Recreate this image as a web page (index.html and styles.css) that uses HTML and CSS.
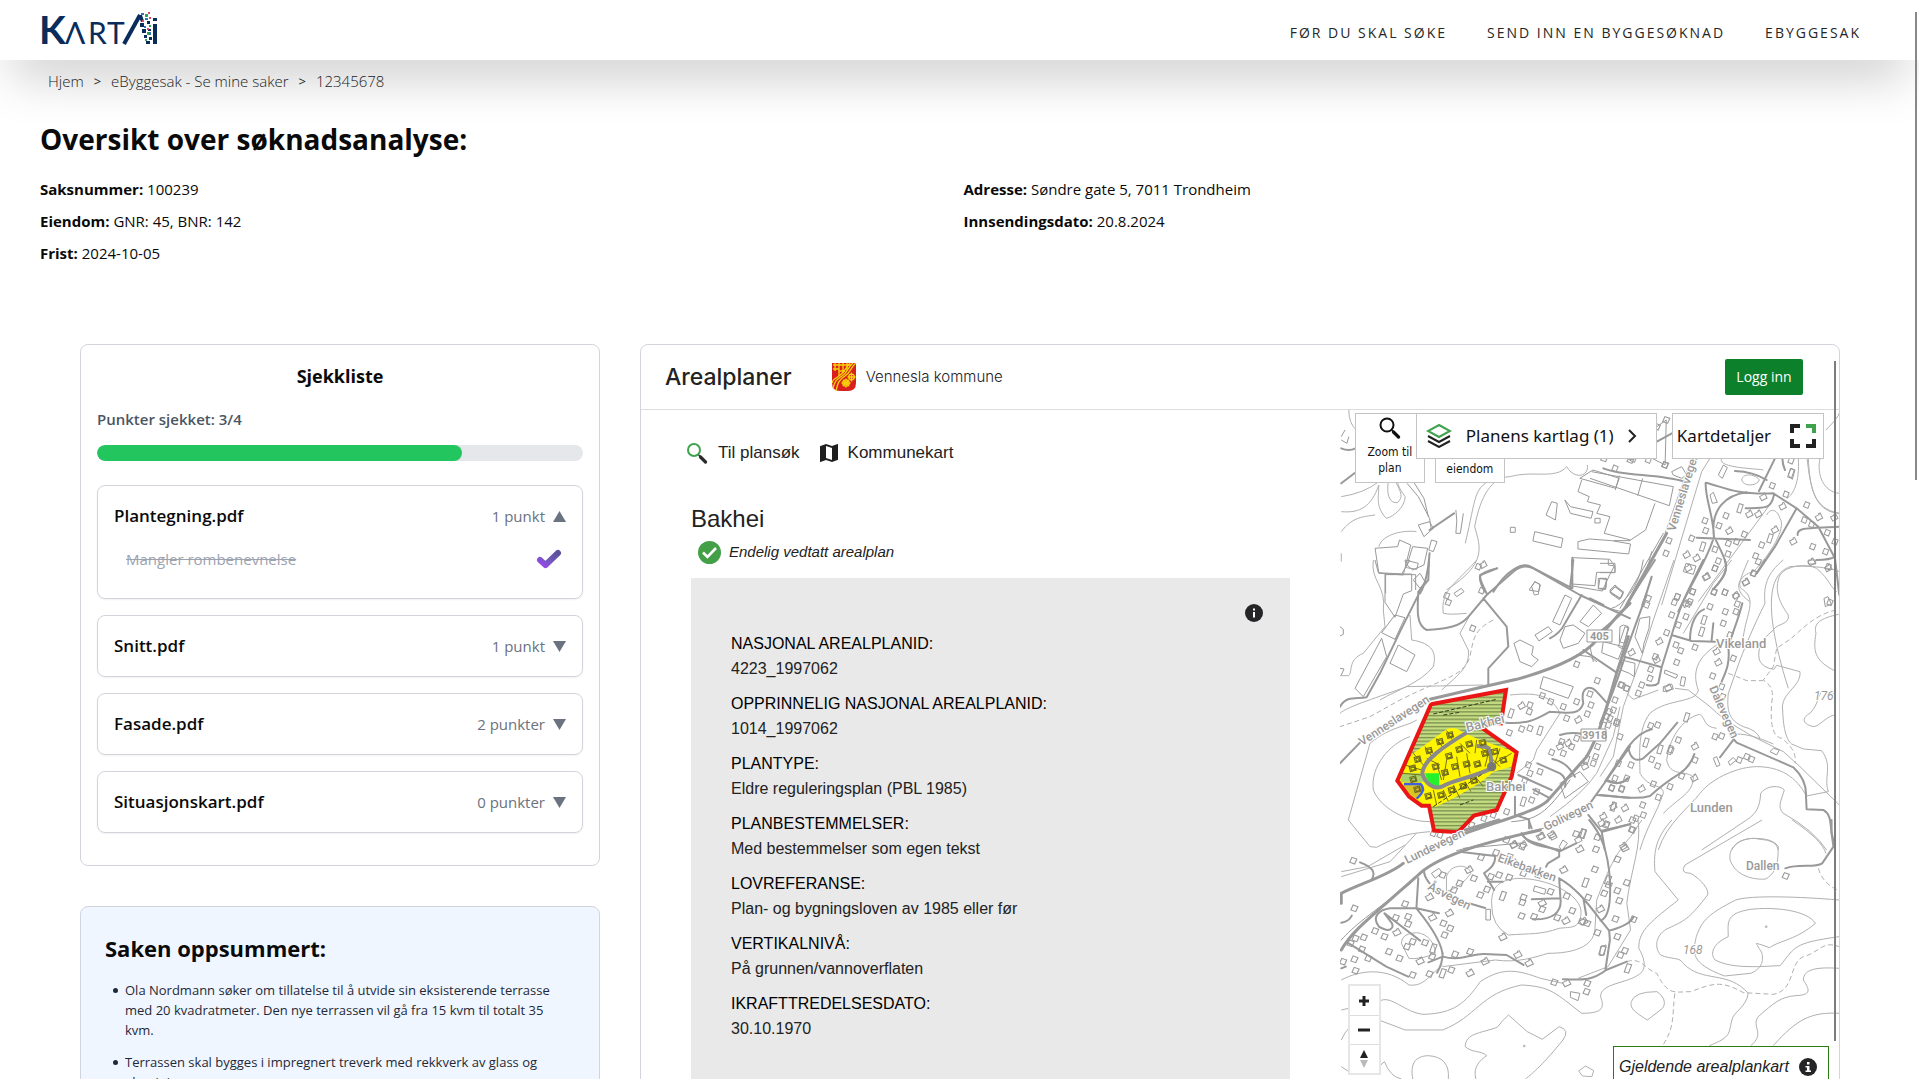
FILE: index.html
```html
<!DOCTYPE html>
<html lang="nb">
<head>
<meta charset="utf-8">
<meta name="viewport" content="width=device-width, initial-scale=1">
<title>KartAI – Oversikt over søknadsanalyse</title>
<link rel="stylesheet" href="styles.css">
</head>
<body>
<header class="topbar">
  <a class="logo" href="#" aria-label="KartAI">
    <svg width="122" height="60" viewBox="0 0 122 60" aria-hidden="true">
      <g class="logo-text">
        <text x="-1" y="44" font-size="39" font-weight="700">K</text>
        <text x="25" y="44" font-size="30">Λ</text>
        <text x="48" y="44" font-size="30">R</text>
        <text x="67" y="44" font-size="30">T</text>
      </g>
      <g transform="translate(2 11)">
      <path d="M82 33 98 4" stroke="#0a2c5c" stroke-width="4" fill="none"/>
      <path d="M111 13h4v20h-4zM111 7h4v3h-4zM96 4h4l2 6-3 1zM98 12h4v4h-4zM100 18h4v4h-4zM102 24h3v3h-3zM104 30h4v3h-4zM107 26h3v3h-3zM105 10h3v3h-3zM106 18h3v2h-3z" fill="#0a2c5c"/>
      <path d="M99 2h3v2h-3zM103 7h3v2h-3zM102 15h2v2h-2zM107 21h2v3h-2z" fill="#2f6fc4"/>
      <path d="M103 3h3v3h-3zM107 14h2v2h-2zM105 21h2v3h-2zM103 28h2v2h-2z" fill="#2fa35a"/>
      <path d="M106 1h2v2h-2zM107 6h2v2h-2zM105 17h2v2h-2zM100 9h2v2h-2z" fill="#dc4b5f"/>
      </g>
    </svg>
  </a>
  <nav class="mainnav">
    <a href="#">Før du skal søke</a>
    <a href="#">Send inn en byggesøknad</a>
    <a href="#">eByggesak</a>
  </nav>
</header>

<nav class="crumbs" aria-label="Brødsmulesti">
  <a href="#">Hjem</a><span class="sep">&gt;</span><a href="#">eByggesak - Se mine saker</a><span class="sep">&gt;</span><a href="#">12345678</a>
</nav>

<main>
  <section class="overview">
    <h1>Oversikt over søknadsanalyse:</h1>
    <div class="facts">
      <div>
        <p><b>Saksnummer:</b> 100239</p>
        <p><b>Eiendom:</b> GNR: 45, BNR: 142</p>
        <p><b>Frist:</b> 2024-10-05</p>
      </div>
      <div>
        <p><b>Adresse:</b> Søndre gate 5, 7011 Trondheim</p>
        <p><b>Innsendingsdato:</b> 20.8.2024</p>
      </div>
    </div>
  </section>

  <div class="columns">
    <div class="left">
      <section class="card checklist">
        <h2>Sjekkliste</h2>
        <p class="status">Punkter sjekket: 3/4</p>
        <div class="bar" role="progressbar" aria-valuenow="3" aria-valuemax="4" aria-label="Punkter sjekket"><div class="fill" style="width:75%"></div></div>
        <div class="item">
          <button class="row" aria-expanded="true"><span class="file">Plantegning.pdf</span><span class="count">1 punkt</span><svg class="tri" width="13" height="11" viewBox="0 0 13 11" aria-hidden="true"><path d="M6.500 0 13 11H0z"/></svg></button>
          <div class="point">
            <s>Mangler rombenevnelse</s>
            <button class="tick" aria-label="Marker som ikke sjekket">
              <svg width="26" height="20" viewBox="0 0 26 20" aria-hidden="true"><defs><linearGradient id="tickfill" x1="1" y1="0" x2="0" y2="1"><stop offset="0" stop-color="#5b5299"/><stop offset=".55" stop-color="#7259bd"/><stop offset="1" stop-color="#9a45ee"/></linearGradient></defs><path d="M4 11 9.500 16 22 4" fill="none" stroke="url(#tickfill)" stroke-width="6" stroke-linecap="round" stroke-linejoin="round"/></svg>
            </button>
          </div>
        </div>
        <div class="item"><button class="row" aria-expanded="false"><span class="file">Snitt.pdf</span><span class="count">1 punkt</span><svg class="tri" width="13" height="11" viewBox="0 0 13 11" aria-hidden="true"><path d="M0 0h13L6.500 11z"/></svg></button></div>
        <div class="item"><button class="row" aria-expanded="false"><span class="file">Fasade.pdf</span><span class="count">2 punkter</span><svg class="tri" width="13" height="11" viewBox="0 0 13 11" aria-hidden="true"><path d="M0 0h13L6.500 11z"/></svg></button></div>
        <div class="item"><button class="row" aria-expanded="false"><span class="file">Situasjonskart.pdf</span><span class="count">0 punkter</span><svg class="tri" width="13" height="11" viewBox="0 0 13 11" aria-hidden="true"><path d="M0 0h13L6.500 11z"/></svg></button></div>
      </section>

      <section class="card summary">
        <h2>Saken oppsummert:</h2>
        <ul>
          <li>Ola Nordmann søker om tillatelse til å utvide sin eksisterende terrasse med 20 kvadratmeter. Den nye terrassen vil gå fra 15 kvm til totalt 35 kvm.</li>
          <li>Terrassen skal bygges i impregnert treverk med rekkverk av glass og aluminium.</li>
        </ul>
      </section>
    </div>

    <section class="card plans">
      <header class="planhead">
        <h2>Arealplaner</h2>
        <svg width="24" height="28" viewBox="0 0 24 28" aria-hidden="true">
          <path d="M0 0h24v20q0 8-8 8H8q-8 0-8-8z" fill="#d8201f"/>
          <g fill="none" stroke="#f7d308" stroke-width="1.300">
            <path d="M1 2h18M3 0v8M7 0v13M11 0v10M15 0v7M1 6h6M7 8h6"/>
            <path d="M24 0C19 4 19 9 13 13S6 19 4 28M21 0C16 4 16 9 10 13S3 18 1 25M18 0C14 4 13 9 7 13S1 17 0 20"/>
            <circle cx="19.500" cy="14" r="2.800"/><circle cx="14" cy="20" r="3.200"/>
            <path d="M19.500 9.500v9M15.500 14h8M14 15.500v9M9.500 20h9M11 17l6 6M17 17l-6 6"/>
          </g>
        </svg>
        <span class="muni">Vennesla kommune</span>
        <button class="login">Logg inn</button>
      </header>
      <div class="planbody">
        <div class="details">
          <nav class="tools">
            <a href="#"><svg width="22" height="22" viewBox="0 0 22 22" aria-hidden="true"><circle cx="8" cy="8" r="6" fill="none" stroke="#3fa34d" stroke-width="2"/><path d="m12.500 13 2 1.500" stroke="#2b2b2b" stroke-width="1.500"/><path d="m14.500 15 5 5" stroke="#2b2b2b" stroke-width="3.200" stroke-linecap="round"/></svg>Til plansøk</a>
            <a href="#"><svg width="18" height="18" viewBox="0 0 18 18" aria-hidden="true"><path d="M17.500 0 12 2 6 0 .5 2Q0 2.200 0 2.600V17.500Q0 18 .5 18L6 16l6 2 5.500-2q.5-.2.5-.6V.5Q18 0 17.500 0zM12 16 6 14V2l6 2z" fill="#1f1f1f"/></svg>Kommunekart</a>
          </nav>
          <h3>Bakhei</h3>
          <p class="state"><svg width="23" height="23" viewBox="0 0 23 23" aria-hidden="true"><circle cx="11.500" cy="11.500" r="11.500" fill="#43a047"/><path d="m5 11.500 4.500 4.500L18 7" fill="none" stroke="#fff" stroke-width="2.600"/></svg>Endelig vedtatt arealplan</p>
          <div class="box">
            <button class="info" aria-label="Informasjon"><svg width="18" height="18" viewBox="0 0 18 18" aria-hidden="true"><circle cx="9" cy="9" r="9" fill="#252527"/><path d="M8 4.500h2v2H8zM8 8h2v5.500H8z" fill="#fff"/></svg></button>
            <dl>
              <dt>NASJONAL AREALPLANID:</dt><dd>4223_1997062</dd>
              <dt>OPPRINNELIG NASJONAL AREALPLANID:</dt><dd>1014_1997062</dd>
              <dt>PLANTYPE:</dt><dd>Eldre reguleringsplan (PBL 1985)</dd>
              <dt>PLANBESTEMMELSER:</dt><dd>Med bestemmelser som egen tekst</dd>
              <dt>LOVREFERANSE:</dt><dd>Plan- og bygningsloven av 1985 eller før</dd>
              <dt>VERTIKALNIVÅ:</dt><dd>På grunnen/vannoverflaten</dd>
              <dt>IKRAFTTREDELSESDATO:</dt><dd>30.10.1970</dd>
            </dl>
          </div>
        </div>

        <div class="map">
          <svg class="mapsvg" viewBox="1340 410 500 720" preserveAspectRatio="xMinYMin slice" role="img" aria-label="Kart over Bakhei">
            <defs>
              <marker id="ha" markerUnits="userSpaceOnUse" markerWidth="30" markerHeight="30" viewBox="-15 -15 30 30" orient="22"><path class="hs" d="M-7-8H7V8H-7z"/></marker>
              <marker id="hb" markerUnits="userSpaceOnUse" markerWidth="34" markerHeight="34" viewBox="-17 -17 34 34" orient="-28"><path class="hs" d="M-9-7H4V-10H9V7H-9z"/></marker>
              <marker id="hc" markerUnits="userSpaceOnUse" markerWidth="40" markerHeight="40" viewBox="-20 -20 40 40" orient="18"><path class="hs" d="M-6-13H6V13H-6z"/></marker>
              <marker id="hy" markerUnits="userSpaceOnUse" markerWidth="30" markerHeight="30" viewBox="-15 -15 30 30" orient="-15"><path class="hs hy" d="M-9-8H9V8H-9zM-5-4H6V5H-5z"/></marker>
              <pattern id="hatch" width="9" height="11" patternUnits="userSpaceOnUse"><path d="M0 0h9v11H0z" fill="#c3dc82"/><path class="sc" d="M0 5h9" stroke="#2c3a12" stroke-width="2"/></pattern>
            </defs>

            <!-- upper left: industrial area -->
            <g transform="translate(1330 330) scale(.3757 .3333)">
              <path class="c" d="M30 500Q90 490 130 455M30 545C80 550 110 530 130 465C130 500 120 530 150 565C170 560 200 530 200 500Q180 470 180 455M155 455C150 500 160 520 180 518C195 500 190 490 175 455M30 605C60 560 90 560 120 555M440 445C380 470 390 500 360 640M310 780C420 700 400 650 385 590C400 500 430 440 480 440C540 420 600 450 630 410C650 450 690 440 685 405M130 650C140 610 200 600 230 605M50 240Q50 280 70 300Q110 260 150 300M30 670v25M1320 300Q1355 260 1355 250M1270 385C1280 500 1300 545 1355 550"/>
              <path class="b" d="M235 585l30-10 10 20-25 25zM120 655l60-5 5-20 30 15-20 90-65-5zM148 790v-56h80v46M205 705l15-55 40 5-10 50-30 15zM335 540q5 30 0 70h12l8-60M670 450l-10 35 30 15-5 15 35 10-10 25 35 10-15 50 70 20 20-15 20-15 25-80M625 510l15 20 60 15-5 20-55-15zM545 605l75 20-5 28-75-20zM660 635l30-8 60 5 50 10-5 30-135-15zM755 632h45M645 683l100 5 12 20-12 25-20 50-80-15zM480 592h13v15h-13zM575 555l15-40 15 5-5 50zM705 565h14v14h-14zM30 330l15 10 5-20M40 300l-10 20M270 630l15 5-10 30-12-5zM100 300l25-20"/>
              <path class="b" d="M205 460L235 500 265 565 270 600M222 455L250 505 262 560M700 420l70 25-10 30-95-30zM530 780l15-25 15 10-5 20z"/>
              <path class="b" style="marker:url(#ha)" fill="none" stroke="none" d="M730 385L765 370 800 390 840 375 892 405 895 270 870 290"/>
              <path class="r" d="M30 460L65 430 110 420M30 355Q50 365 68 355M265 600L330 550M265 670Q260 750 240 790M445 715L400 735Q395 750 412 785M435 785C470 720 510 700 530 708L645 775V683M870 335L910 310"/>
            </g>

            <!-- upper right -->
            <g transform="translate(1590 455) scale(.3333)">
              <path class="c" d="M360 10L335 50 215 450M305 10L225 235M395 10C380 40 500 40 520 45M455 75C460 50 500 60 508 75C500 95 460 95 455 75M690 10C680 60 700 110 748 115M655 10C660 100 670 160 748 175M625 10C630 80 610 120 590 130M480 440C420 400 450 360 490 350C540 300 590 220 570 190C560 160 540 160 530 180M595 700C500 400 560 350 600 335C660 330 730 340 748 350M550 135L325 440"/>
              <path class="b" d="M5 50L250 95 238 152 0 70M88 62L76 105M158 70L143 122M245 50l30-15 15 25-15 10-25-10zM385 60l15-30 12 8-15 32zM360 120l10-8 12 30-15 3zM595 60l8-20 12 5-8 28zM75 395l25 15-10 22-30-20zM30 370h20l-3 30H25z"/>
              <path style="marker:url(#ha)" fill="none" stroke="none" d="M225 30L175 15 130 12 75 40 237 257 228 295 305 250 345 197 347 227 387 212 408 182 463 238 415 265 440 260 414 297 375 283 385 318 375 340 308 410 372 412 405 412 262 425 300 440 547 92 588 118 650 150 665 208 643 195 712 233 735 260 707 290 715 335 668 275 515 270 497 303 492 355 603 17 720 442"/>
              <path style="marker:url(#hb)" fill="none" stroke="none" d="M418 228L295 340 320 310 348 367 438 422 520 127 478 178 505 178 578 155 687 187 733 188 665 322 610 260 468 382 555 225 290 300"/>
              <path style="marker:url(#hc)" fill="none" stroke="none" d="M338 275L450 160 540 250 603 55"/>
              <path class="r" d="M40 40C100 65 200 55 283 80M347 83C345 130 370 180 372 245C350 320 300 390 265 470M347 83C400 95 430 120 550 115L620 160 685 215 735 310 748 420M372 245C360 160 410 120 470 112M320 248L480 255M375 250C400 300 415 330 405 350Q400 370 372 400M620 160L555 275 500 355M435 48Q490 50 530 75M555 10L507 108M577 10Q578 30 585 45M552 120C540 170 520 155 467 160M748 215C660 220 620 215 623 240M680 315Q720 315 735 305M0 430l40 20"/>
              <path class="r w" d="M230 235L110 450"/><path class="r n" d="M220 235L160 340 90 460M185 290q-10 60-70 150M185 370L155 450"/>
            </g>

            <!-- centre left -->
            <g transform="translate(1330 560) scale(.3333)">
              <path class="c" d="M130 0C120 60 170 80 160 150L165 200 100 280C50 300 70 340 55 347H30M240 165L245 240C310 250 320 280 310 320C270 370 200 390 150 420M30 460C50 440 150 410 230 380L460 375M120 550L55 780 120 860 140 862C220 820 250 820 300 815M240 530C180 550 120 620 130 690C150 740 220 785 300 785M120 550C180 500 230 500 260 480M335 390C390 340 420 320 415 270L390 220 420 165M340 160C330 90 380 70 440 0M340 160Q360 165 410 160M540 405C600 400 660 395 690 460L620 570 610 600 560 640M660 770Q760 700 800 640L850 530 870 440"/>
              <path class="c d" d="M490 180C430 210 430 240 420 290C400 350 350 350 210 420L120 470 30 500"/>
              <path class="b" d="M135 0L145 38 215 42 240 0M165 42h80v50l-25 10-25 70-30-45zM195 165l30 8-30 65-40-20zM155 235L75 385 100 410 170 290zM205 255l50 30-25 50-50-25zM640 350l90 30-15 35-85-30zM705 105l20 10-35 80-22-10zM615 225l40-25 12 15-40 28zM690 240l15-40 25-5 35 25-20 30-45 15zM570 240l40 20-5 25 20 15-20 20-35-15-18-55zM750 185l40-50 25 25-40 40zM725 0v72l70 5 5-40h55V18l-20-3V0M690 670l60-35 25 30-70 50zM820 245l60 15-15 38-50-20zM885 200l-20 60 12 6 20-62zM250 60l20-20 15 25-15 20zM225 0l40 10-5 18-30-5zM30 200l10 8v15l-10 5M30 325l12 2-8 18M605 80l10-15 15 8-5 30-12 2zM840 95l15-15 25 20-8 15zM805 55l25 3-3 30-22-2zM372 100l22-15 8 10-22 15z"/>
              <path style="marker:url(#ha)" fill="none" stroke="none" d="M355 127L350 107 428 205 455 92 445 20 637 407 740 313 802 362 662 425 700 440 600 435 598 455 780 402 740 425 783 435 772 462 710 475 600 505 575 507 538 518 665 577 695 545 700 580 725 560 740 535 835 495 797 590 803 560 790 610 595 615 600 640 630 635 585 660 620 695 605 720 490 765 462 775 425 795 530 755 845 685 875 685 865 610 860 490 870 530 890 385 875 375 838 455 330 825 310 820"/>
              <path style="marker:url(#hb)" fill="none" stroke="none" d="M460 15L575 438 745 480 765 620 715 550 690 560 745 840 670 830 635 830 815 790 850 740 550 855 720 770 580 855 820 770"/>
              <path style="marker:url(#hc)" fill="none" stroke="none" d="M543 460L630 512 580 725 770 600 820 500 760 822"/>
              <path class="r" d="M30 610L90 548M30 440C50 405 80 418 110 412L150 340 210 215 270 95M297 0L295 60 265 95C262 150 258 195 290 210C380 205 400 190 420 165L470 105 550 35Q580 10 610 25L750 105 900 175M500 25C440 45 440 40 470 100M460 115L530 200 535 260 475 325V375M755 105L705 190Q690 220 660 235M730 0L720 85M760 270L860 338M525 488C600 495 630 470 660 455C720 460 750 465 760 430C750 380 780 375 800 395L830 428M690 525Q720 515 760 522M622 610L690 640Q712 655 705 680M667 597Q710 605 735 650M565 645L665 690M610 688L655 712M555 710V765L595 778 605 805M900 560L830 660 780 730M800 705L900 713M830 660Q870 680 892 655M775 765L815 815 825 870M575 820Q590 850 640 860L690 870"/>
              <path class="r w" d="M300 418L470 378 560 358C660 330 760 290 800 240L865 165 900 130M895 230L860 340C830 440 810 520 770 590L650 725C620 750 580 760 400 822"/>
              <path class="r n" d="M740 285l40 5 20 15M780 260l10 45M835 145l40 10M545 785C620 780 650 760 720 660M380 872L640 805"/>

              <g class="plan">
              <path d="M303 433L528 390 513 490 488 488 458 505 560 577 545 650 500 750 432 767 384 817 312 812 297 737 275 737 237 710 202 662z" fill="url(#hatch)"/>
              <path d="M222 610L250 580 350 508Q375 498 395 515L450 540 560 577 545 620 490 635C440 680 380 710 318 740L275 737 237 710 215 670 205 655z" fill="#fff500"/>
              <path d="M217 638L275 640 282 665H212z" fill="#a8d26b"/>
              <path d="M217 675L275 675 285 690 260 718 237 705z" fill="#d9c326"/>
              <path d="M222 672L272 672Q290 690 260 716" fill="none" stroke="#3f5fe0" stroke-width="7"/>
              <path d="M250 580L280 615M285 560l22 32M320 535l20 30M350 512l22 35M390 550l30 30M440 540l-5 40M410 580l10 60M380 590l10 60M350 600l-10 60M320 610l15 50M450 560l60 60M480 560l-15 60M510 565l-15 45M545 580l-50 30M310 690l10 45M340 690l15 35M370 675l20 40M405 665l18 30M440 655l20 25M225 615l50 15M215 640l60 5M290 595l40 20" stroke="#777018" stroke-width="3"/>
              <path d="M285 640h42v38q-30 10-42-38z" fill="#25f22d"/>
              <path d="M415 515C340 560 280 600 277 640C285 670 310 690 335 680C370 660 420 655 485 625C480 560 485 560 440 558" fill="none" stroke="#8a8a8a" stroke-width="12"/><circle cx="485" cy="620" r="14" fill="#777"/>
              <path style="marker:url(#hy)" fill="none" stroke="none" d="M360 525L330 545 297 572 263 598 248 625 250 658 262 688 295 708 333 705 365 690 400 678 432 662 317 620 345 638 375 620 410 612 442 612 357 588 388 568 418 552 458 548 465 580 495 575 520 600"/>
              <path d="M310 462L500 418M340 465l50-8M310 740L460 640M390 735l40-15" stroke="#333d20" stroke-width="3" stroke-dasharray="12 6"/>
              <path d="M303 433L528 390 513 490 488 488 458 505 560 577 545 650 500 750 432 767 384 817 312 812 297 737 275 737 237 710 202 662z" fill="none" stroke="#ea1515" stroke-width="12"/>
              </g>
            </g>

            <!-- centre right -->
            <g transform="translate(1600 560) scale(.3333)">
              <path class="c" d="M222 0L160 180 125 290 70 440 40 590 0 650M550 0C500 40 490 80 495 130C460 200 440 250 420 300L385 400C380 450 385 480 430 500Q470 510 480 535M565 165C540 130 520 90 540 45C560 15 620 10 650 25C690 60 690 80 710 95M565 165C570 195 530 190 520 210C490 235 470 260 478 300Q490 325 522 328L530 316 600 335C605 380 540 400 548 450C550 510 560 540 575 552L610 567 665 572C700 620 670 650 685 695L620 708M716 163C660 175 640 190 648 220C640 270 640 300 705 333M708 465C680 465 660 500 640 500C600 490 610 470 630 460C660 430 650 400 670 395L708 400M225 385L265 390 330 440C380 490 430 510 450 525L550 575 600 620 718 735M390 525C430 515 480 535 520 552M175 870C200 790 270 740 300 700C340 650 420 620 470 620C540 620 590 650 620 710M395 870C410 840 450 830 480 838Q530 840 535 870M350 255C280 300 280 350 295 390C290 430 200 415 150 460C110 510 120 600 120 640C150 690 190 670 190 700C170 760 140 800 120 870M200 600C210 520 260 470 300 463C320 480 310 500 350 505M200 600C210 650 250 630 280 650C280 700 240 710 190 760M445 0C420 60 410 80 430 90C470 120 440 160 430 230M395 0L340 70 250 220M80 400L100 418 175 390M305 870L440 780C470 760 480 740 482 700C500 675 540 675 553 690C545 720 530 740 550 760Q640 810 680 870"/>
              <path class="c d" d="M708 150C640 165 600 215 570 238L530 265 520 320 490 360C520 380 520 400 515 430C510 500 520 530 545 535C580 560 590 590 585 610M385 340L440 362H490"/>
              <path class="b" d="M250 35l8-25 30 8-8 25zM30 90l15-15 25 22-12 22-25-18zM195 330l38 15-5 10-35-15zM60 200l10-5 15 5-12 50-15-5zM105 230l15-55 30-5-3 35-15 45 -5 30zM65 300l40 10-2 40-15-10-25-10zM240 375l5-25 12 3-5 26zM190 380l25-8 5 15-30 8zM340 595l10-5 10 25-10 5zM385 605l15-12 8 8-18 15zM510 575l10-10 18 5-8 15zM0 55l20 3-5 30-15-2M0 10h45v28H0M672 115l12-5 10 22-18 8zM625 0h22v12h-22z"/>
              <path style="marker:url(#ha)" fill="none" stroke="none" d="M145 115L140 135 232 110 223 127 278 95 265 132 258 170 215 165 235 195 200 218 342 95 375 97 408 108 330 140 412 132 408 155 376 155 370 190 228 255 242 272 230 307 285 262 166 290 152 328 150 355 400 295 338 348 365 380 368 410 125 375 115 400 62 375 80 385 45 420 40 450 30 475 50 485 152 497 173 495 345 530 365 528 235 540 213 570 155 598 173 618 93 615 285 600 245 648 175 712 210 680 65 688 35 683 45 655 80 655 128 735 108 775 130 765 95 808 20 792 20 470 460 40 475 5 390 225 345 25 440 590 455 598 418 600 160 672"/>
              <path style="marker:url(#hb)" fill="none" stroke="none" d="M320 50L437 68 258 132 178 245 95 278 350 275 355 308 285 560 283 655 125 687 75 745 55 780 70 860 205 385 685 25 170 300"/>
              <path style="marker:url(#hc)" fill="none" stroke="none" d="M305 215L312 180 138 548 180 568 210 570 260 472 40 740"/>
              <path class="r" d="M310 0L270 80C240 140 225 190 215 225L185 322 175 370Q165 380 140 375M72 290L185 322M215 225L275 243 345 245M270 240C270 190 290 155 312 148M335 240L340 190M375 0C385 30 375 50 340 88M427 130C415 180 400 210 385 260C390 310 380 330 365 365M495 0L470 40M390 525L410 548 580 622C610 650 620 680 618 710L620 748 670 750C695 765 690 790 695 820L705 860M400 540L360 592M15 665L85 560Q120 515 155 508M85 560C90 600 110 605 130 595L180 550 232 488M0 705C60 710 110 720 150 708C180 680 200 665 240 640Q270 620 283 582M18 662Q60 680 85 655M5 812L90 793M155 50L130 130 72 290M75 290Q40 400 0 490M165 0L60 165 0 215"/>
              <path class="r n" d="M130 0Q120 60 90 100T35 145"/>
            </g>

            <!-- lower part -->
            <g transform="translate(1330 820) scale(.3757 .3333)">
              <path class="c" d="M30 170L160 125 230 40M30 155L100 140 200 75M430 250C430 200 450 180 500 175C580 175 660 220 668 270C670 330 640 320 610 325C560 345 530 340 475 345Q430 320 430 250M300 440L440 420C500 430 550 410 580 400C650 400 700 380 705 330L710 240C740 150 760 100 800 50L830 0M820 0C830 80 800 150 790 250L800 330 740 440 660 475M910 0C870 50 860 90 865 155L927 240C860 300 820 330 822 385C850 440 830 460 820 465C790 490 720 490 720 530C730 560 730 580 670 580C600 520 590 500 510 495C400 520 390 590 300 630H200L130 600M30 480C80 450 150 440 210 495C250 500 260 470 300 435M130 545C160 520 200 580 250 583C330 580 360 550 400 485C460 440 500 450 560 475L620 490M1150 0L945 135Q930 160 960 160C990 180 1010 210 1005 225C960 290 950 300 900 325C870 340 860 380 880 405C910 420 930 410 940 430C990 490 1060 450 1113 520C1110 560 1070 580 1070 600C1060 640 1070 650 1010 677M1230 0Q1310 60 1320 100M1355 240C1250 230 1120 225 1080 240C1010 280 990 300 975 350C965 400 960 430 1050 468L1120 460C1160 440 1150 410 1150 400C1130 360 1130 370 1150 375L1170 383C1200 360 1240 360 1292 310C1270 270 1180 260 1120 268C1050 280 1060 310 1060 350C1020 370 1010 400 1025 420C1060 440 1100 440 1140 440L1198 437C1240 380 1230 370 1355 350M1130 55C1080 55 1060 90 1065 120C1080 170 1130 180 1160 177C1200 150 1190 100 1194 80Q1180 55 1130 55M845 600C800 570 800 560 802 545Q810 515 870 515C890 530 895 550 885 565zM360 680C360 640 400 640 445 622Q460 600 475 585L525 635 565 658 610 620Q640 630 620 660C570 730 540 760 520 777M360 680C380 700 400 690 417 707C400 720 380 740 388 777M225 800C210 740 220 710 260 707Q320 710 315 777M130 740L145 725Q160 770 190 777M680 738l-18 15 10 15 25 2 5-18zM1355 445C1290 440 1260 450 1260 480C1270 500 1290 525 1240 527C1200 530 1180 550 1140 590C1120 620 1160 640 1120 677M1355 580C1280 575 1240 600 1180 677M30 570L50 565M30 740L50 755M30 660q10-25 20-35M310 170C320 130 370 130 375 160Q350 200 310 215zM190 370Q190 340 230 338C260 340 280 370 280 400Q240 420 210 415ZM515 676h4v4h-4zM1159 318h4v4h-4z"/>
              <path class="c d" d="M790 425C830 410 840 450 870 460C900 530 920 515 960 515C1020 490 1040 480 1100 518L1180 523C1240 510 1220 430 1260 410C1300 400 1310 360 1355 380M918 520C910 580 920 620 885 677M1300 145Q1310 190 1355 212"/>
              <path class="b" d="M545 198l30 10-4 15-30-10zM415 268h12v32h-12zM720 380l15-5-5 30-12 2zM610 80l10-20 12 10-15 22zM270 160l20-15 8 12-18 18zM640 515l25 5-5 22-20-10z"/>
              <path style="marker:url(#ha)" fill="none" stroke="none" d="M62 122L65 265 200 252 208 290 208 312 175 293 120 333 145 350 90 352 68 355 85 388 65 418 102 415 68 452 157 395 185 415 205 380 220 365 253 368 272 410 265 462 220 465 302 310 320 325 305 345 373 395 333 403 323 450 400 225 418 208 383 175 402 112 442 98 470 60 512 80 478 110 450 165 428 170 515 232 587 215 512 247 565 268 510 288 543 290 605 293 645 272 670 305 685 310 630 228 687 232 730 220 765 212 742 195 770 242 705 148 765 118 708 88 790 188 712 338 765 350 773 405 785 392 760 297 808 298 685 490 683 515 597 487 477 172 515 160 555 165 805 0 805 30 712 52 655 42 735 15 1213 168 35 425 55 370 300 165 345 190 330 210"/>
              <path style="marker:url(#hb)" fill="none" stroke="none" d="M178 338L273 293 318 280 240 424 373 460 413 425 460 352 500 405 530 430 565 250 628 303 720 268 630 490 665 88 622 150 590 45 560 50 490 75 265 232 370 150 490 130 785 85 675 305"/>
              <path style="marker:url(#hc)" fill="none" stroke="none" d="M300 460L275 385 460 228 680 188 725 392 793 445 740 180 672 40"/>
              <path class="r" d="M80 127C110 140 125 155 110 180M345 95L440 108C440 140 420 150 410 160L437 210M420 185H460M235 175L230 265M250 150Q250 170 265 190M230 265H160C130 270 110 290 130 320C160 340 170 325 165 310L145 280 240 362M230 265L290 280M230 265C270 320 300 370 300 410C350 425 380 400 410 402L470 405 515 435M300 400Q300 430 285 458M50 370L150 440 208 470M300 410L262 427M370 250L413 264M510 40C520 70 570 70 610 95L655 70M610 95V110L580 130 575 140M610 175C650 200 680 240 720 300L743 332 745 360 733 450M690 0C720 40 740 90 745 180Q750 290 720 302M743 332Q800 315 808 290M620 478C680 480 700 480 735 450L790 425M610 175L613 230C620 280 590 300 540 298M537 238L612 235M675 240L682 285M725 35L800 12M1212 145C1250 130 1290 145 1310 130L1340 80 1335 40V0M30 308Q50 305 58 287M30 445l12-5M530 0v25"/>
              <path class="r w" d="M30 220C80 190 150 170 195 130M360 30L450 0M30 390C60 330 110 290 230 170C280 110 400 70 560 30M30 250v-30"/>
              <path class="r n" d="M30 360C60 320 110 280 215 190M355 85L520 68"/>
            </g>

            <g class="lbl">
              <text x="1716" y="648">Vikeland</text>
              <text x="1690" y="812">Lunden</text>
              <text class="s" x="1746" y="870">Dallen</text>
              <text class="s i" x="1814" y="700">176</text>
              <text class="s i" x="1683" y="954">168</text>
              <text x="1467" y="732" transform="rotate(-14 1467 732)">Bakhei</text>
              <text x="1486" y="791">Bakhei</text>
              <text class="s" transform="translate(1362 746) rotate(-33)">Venneslavegen</text>
              <text class="s" transform="translate(1675 532) rotate(-73)">Venneslavegen</text>
              <text class="s" transform="translate(1709 688) rotate(66)">Dalevegen</text>
              <text class="s" transform="translate(1546 831) rotate(-26)">Golivegen</text>
              <text class="s" transform="translate(1497 861) rotate(20)">Eikebakken</text>
              <text class="s" transform="translate(1427 889) rotate(27)">Åsvegen</text>
              <text class="s" transform="translate(1407 864) rotate(-26)">Lundevegen</text>
              <path d="M1587 630h25v12h-25zM1581 729h25v12h-25z" fill="#fff" stroke="#999"/>
              <text class="n" x="1590" y="640">405</text><text class="n" x="1582" y="739">3918</text>
            </g>
          </svg>
          <button class="mapbtn property">eiendom</button>
          <button class="mapbtn zoomplan"><svg width="22" height="22" viewBox="0 0 22 22" aria-hidden="true"><circle cx="8" cy="8" r="6.500" fill="none" stroke="#111" stroke-width="2"/><path d="m12.500 13 2 1.500" stroke="#111" stroke-width="1.500"/><path d="m14.500 15 5 5" stroke="#111" stroke-width="3.200" stroke-linecap="round"/></svg>Zoom til plan</button>
          <button class="mapbtn layers"><svg width="26" height="24" viewBox="0 0 26 24" fill="none" stroke="#222" stroke-width="2" aria-hidden="true"><path d="M13 1 24 7 13 13 2 7z" stroke="#3fa34d"/><path d="m2 12 11 6 11-6M2 17l11 6 11-6"/></svg><span>Planens kartlag (1)</span><svg width="9" height="14" viewBox="0 0 9 14" fill="none" stroke="#222" stroke-width="2" aria-hidden="true"><path d="m1 1 6 6-6 6"/></svg></button>
          <button class="mapbtn detail"><span>Kartdetaljer</span><svg width="26" height="24" viewBox="0 0 26 24" fill="none" stroke="#222" stroke-width="4" aria-hidden="true"><path d="M2 9V2h8M2 15v7h8M24 15v7h-8"/><path d="M16 2h8v7" stroke="#3fa34d"/></svg></button>
          <div class="zoomctl">
            <button aria-label="Zoom inn"><svg width="12" height="12" viewBox="0 0 12 12" stroke="#222" stroke-width="3" aria-hidden="true"><path d="M6 1v10M1 6h10"/></svg></button>
            <button aria-label="Zoom ut"><svg width="12" height="12" viewBox="0 0 12 12" stroke="#222" stroke-width="3" aria-hidden="true"><path d="M0 6h12"/></svg></button>
            <button aria-label="Nord opp"><svg width="8" height="18" viewBox="0 0 8 18" aria-hidden="true"><path d="M4 0 8 8H0z" fill="#222"/><path d="M4 18 0 10h8z" fill="#bbb"/></svg></button>
          </div>
          <div class="current"><span>Gjeldende arealplankart</span><svg width="18" height="18" viewBox="0 0 18 18" aria-hidden="true"><circle cx="9" cy="9" r="9" fill="#252527"/><path d="M8 4h2.500v2.500H8zM6.500 8h4v4.500H12V14H6.500v-1.500H8v-3H6.500z" fill="#fff"/></svg></div>
        </div>
      </div>
      <div class="innerthumb"></div>
    </section>
  </div>
</main>
<div class="pagethumb"></div>
</body>
</html>
```
FILE: styles.css
```css
* { box-sizing: border-box; }
html { scrollbar-width: none; }
body {
  margin: 0;
  background: #fff;
  color: #0a0a0a;
  font-family: "Segoe UI", "Open Sans", "Noto Sans", sans-serif;
  font-size: 15px;
  line-height: 24px;
}
h1, h2, h3, p, ul, dl, dd { margin: 0; padding: 0; }
button { font: inherit; color: inherit; background: none; border: 0; padding: 0; cursor: pointer; }
a { color: inherit; text-decoration: none; }
svg { display: block; flex: none; }

.topbar {
  display: flex;
  align-items: center;
  justify-content: space-between;
  height: 60px;
  padding: 0 58px 0 40px;
  background: #fff;
  box-shadow: 0 25px 50px -12px rgba(0, 0, 0, .25);
}
.logo-text { font-family: Lato, sans-serif; fill: #0a2c5c; }
.mainnav { display: flex; gap: 40px; padding-top: 5px; }
.mainnav a { font-size: 14px; letter-spacing: 2px; text-transform: uppercase; color: #262626; }

.crumbs { display: flex; gap: 10px; padding: 9px 48px 0; font-weight: 300; color: #222; }
.crumbs .sep { font-size: 13px; font-weight: 400; }

.overview { padding: 24px 40px 0; }
h1 { font-size: 28px; line-height: 44px; font-weight: 700; }
.facts { display: grid; grid-template-columns: 1fr 1fr; gap: 8px; padding-top: 16px; }
.facts p { margin-bottom: 8px; }

.columns {
  display: grid;
  grid-template-columns: 13fr 30fr;
  gap: 40px;
  padding: 71px 79px 40px 80px;
  align-items: start;
}
.left { display: grid; gap: 40px; }
.card { border: 1px solid #d1d5db; border-radius: 8px; background: #fff; }

.checklist { padding: 17px 16px 32px; }
.checklist h2 { font-size: 18px; line-height: 28px; text-align: center; font-weight: 700; }
.status { font-weight: 600; color: #4b5563; padding-top: 17px; }
.bar { height: 16px; margin: 14px 0 24px; border-radius: 8px; background: #e5e7eb; overflow: hidden; }
.fill { height: 100%; border-radius: 8px; background: #22c55e; }
.item {
  border: 1px solid #d1d5db;
  border-radius: 8px;
  padding: 16px;
  box-shadow: 0 1px 2px rgba(0, 0, 0, .06);
}
.item + .item { margin-top: 16px; }
.row { display: flex; align-items: center; gap: 8px; width: 100%; height: 28px; }
.file { flex: 1; text-align: left; font-size: 17px; font-weight: 600; }
.count { color: #6b7280; }
.tri { fill: #6b7280; }
.point { display: flex; justify-content: space-between; align-items: center; padding: 17px 4px 11px 12px; color: #9ca3af; }

.summary { background: #eff6ff; padding: 23px 40px 32px 24px; min-height: 260px; }
.summary h2 { font-size: 22px; line-height: 36px; }
.summary ul { list-style: none; padding: 14px 0 0 20px; font-size: 13px; line-height: 20px; color: #1f2937; }
.summary li { position: relative; }
.summary li::before { content: ""; position: absolute; left: -12px; top: 8px; width: 5px; height: 5px; border-radius: 50%; background: #1f2937; }
.summary li + li { margin-top: 12px; }

.plans { position: relative; overflow: hidden; font-family: Arial, "Liberation Sans", sans-serif; color: #222; }
.planhead { display: flex; align-items: center; height: 65px; padding: 0 36px 0 24px; border-bottom: 1px solid #ddd; }
.planhead h2 { font: 500 23px/28px Inter, sans-serif; margin-right: 40px; }
.muni { font: 300 15px/24px Inter, sans-serif; margin-left: 10px; }
.login { margin-left: auto; width: 78px; height: 36px; border-radius: 2px; background: #0d802b; color: #fff; font: 500 14px/20px "Open Sans", sans-serif; }
.planbody { display: grid; grid-template-columns: 7fr 5fr; }

.details { padding: 31px 50px 40px; }
.tools { display: flex; gap: 20px; font-size: 17px; }
.tools a { display: flex; align-items: center; gap: 10px; }
.tools a:first-child { margin-left: -5px; }
.details h3 { font-size: 24px; font-weight: 400; line-height: 32px; margin-top: 38px; }
.state { display: flex; align-items: center; gap: 8px; padding-left: 7px; margin-top: 5px; font-size: 15px; font-style: italic; }
.box { position: relative; margin-top: 14px; background: #e9e9e9; padding: 53px 40px 60px; }
.info { position: absolute; top: 26px; right: 27px; }
dl { font-size: 16px; line-height: 25px; }
dt { color: #000; }
dd { margin-bottom: 10px; }

.map { position: relative; height: 720px; overflow: hidden; background: #fff; }
.mapsvg { width: 100%; height: 100%; }
.c, .b, .r { fill: none; vector-effect: non-scaling-stroke; }
.c { stroke: #b0b0b0; stroke-width: 1px; }
.d { stroke-dasharray: 5 3; }
.b { stroke: #999; stroke-width: 1px; }
.hs { fill: none; stroke: #999; stroke-width: 3px; }
.hy { stroke: #6f6a1c; }
.r { stroke: #999; stroke-width: 2px; stroke-linejoin: round; stroke-linecap: round; }
.w { stroke-width: 3px; }
.n { stroke-width: 1px; }
.lbl text { font: 500 13px Roboto, sans-serif; fill: #999; stroke: #fff; stroke-width: 2px; paint-order: stroke; }
.lbl .s { font-size: 12px; }
.lbl .i { font-style: italic; font-weight: 400; }
.lbl .n { font-size: 11px; font-weight: 700; stroke-width: 0; }

.mapbtn { position: absolute; top: 3px; background: #fff; border: 1px solid #c4c4c4; color: #111; font: 12px/16px "DejaVu Sans Condensed", "DejaVu Sans", sans-serif; }
.zoomplan { left: 15px; width: 70px; height: 70px; display: flex; flex-direction: column; align-items: center; gap: 5px; padding: 3px 8px 0; }
.property { left: 95px; width: 70px; height: 70px; padding-top: 42px; }
.layers { left: 76px; width: 241px; height: 46px; display: flex; align-items: center; gap: 14px; padding-left: 9px; font: 17px/24px "Noto Sans", sans-serif; }
.detail { left: 332px; width: 152px; height: 46px; display: flex; align-items: center; justify-content: space-between; padding: 0 7px 0 4px; font: 17px/24px "Noto Sans", sans-serif; }
.zoomctl { position: absolute; left: 8px; top: 574px; width: 33px; border: 2px solid #e6e6e6; background: #fff; }
.zoomctl button { display: flex; align-items: center; justify-content: center; width: 100%; height: 29px; }
.zoomctl button + button { border-top: 1px solid #ddd; }
.current { position: absolute; right: 10px; top: 636px; height: 46px; width: 216px; display: flex; align-items: center; justify-content: space-between; padding: 0 11px 4px 5px; border: 1px solid #2b7d0f; background: #fff; font-size: 16px; font-style: italic; white-space: nowrap; }

.innerthumb { position: absolute; right: 3px; top: 16px; width: 2px; height: 680px; background: #7d7d7d; }
.pagethumb { position: fixed; right: 2px; top: 12px; width: 2px; height: 468px; background: #888; }

@media (max-width: 1400px) {
  .columns, .planbody { grid-template-columns: 1fr; }
}
```
